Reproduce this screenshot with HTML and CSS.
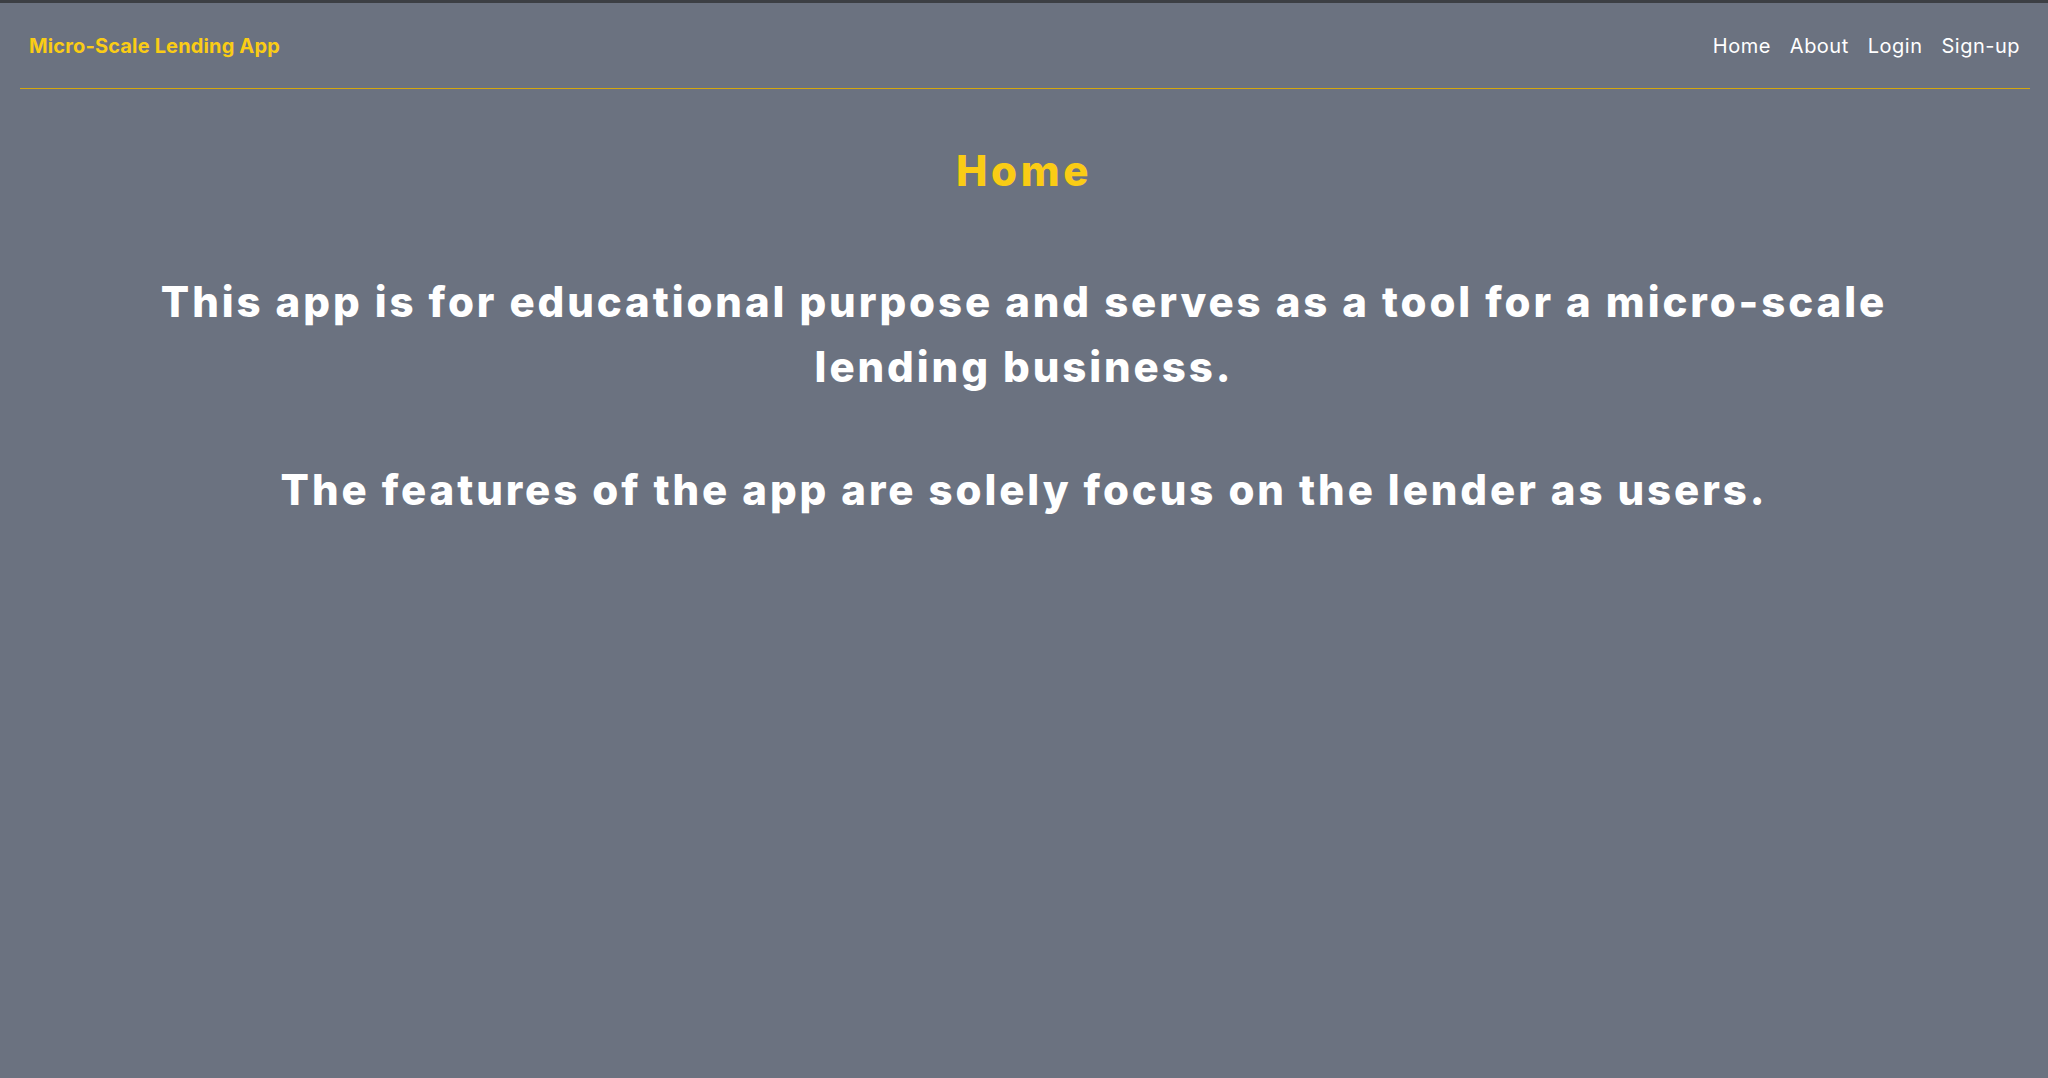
FILE: index.html
```html
<!DOCTYPE html>
<html lang="en">
<head>
<meta charset="utf-8">
<title>Micro-Scale Lending App</title>
<link rel="stylesheet" href="styles.css">
</head>
<body>
<header class="topbar">
  <a class="brand" href="#">Micro-Scale Lending App</a>
  <nav class="nav">
    <a href="#">Home</a>
    <a href="#">About</a>
    <a href="#">Login</a>
    <a href="#">Sign-up</a>
  </nav>
</header>
<main class="content">
  <h1 class="title">Home</h1>
  <p class="lead">This app is for educational purpose and serves as a tool for a micro-scale lending business.</p>
  <p class="lead">The features of the app are solely focus on the lender as users.</p>
</main>
</body>
</html>
```
FILE: styles.css
```css
html, body {
  margin: 0;
  padding: 0;
}
body {
  min-height: 1075px;
  background: #6b7280;
  border-top: 3px solid #3c3f44;
  font-family: Inter, "Open Sans", sans-serif;
  color: #ffffff;
}
a {
  text-decoration: none;
}
.topbar {
  display: flex;
  justify-content: space-between;
  align-items: center;
  margin: 0 18px 0 20px;
  padding: 0 10px 0 9px;
  height: 85px;
  border-bottom: 1.5px solid #d4a70e;
}
.brand {
  color: #facc15;
  font-weight: 700;
  font-size: 20px;
  letter-spacing: 0.15px;
}
.nav {
  display: flex;
  gap: 19px;
}
.nav a {
  color: #ffffff;
  font-size: 20px;
  letter-spacing: 0.5px;
}
.content {
  text-align: center;
  padding: 0 100px;
}
.title {
  margin: 56px 0 0;
  color: #facc15;
  font-size: 42px;
  font-weight: 800;
  letter-spacing: 3.6px;
}
.lead {
  margin: 58px 0 0;
  font-size: 42px;
  font-weight: 800;
  line-height: 1.55;
  letter-spacing: 2.9px;
}
.title + .lead {
  margin-top: 73px;
}
```
